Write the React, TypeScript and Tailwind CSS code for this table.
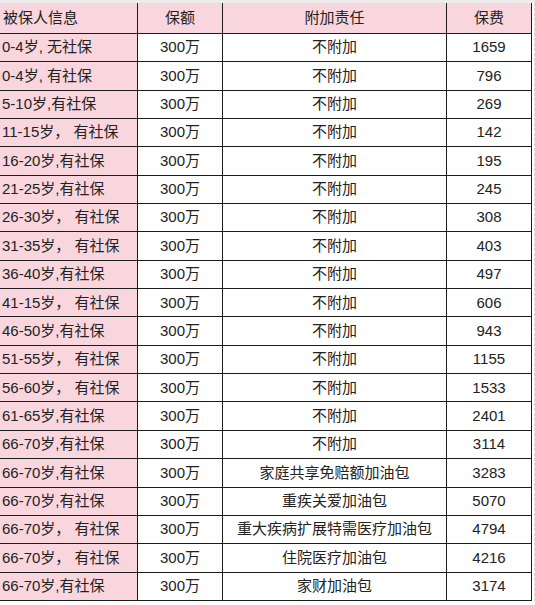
const rows: [string, string, string][] = [
  ["0-4岁, 无社保", "不附加", "1659"],
  ["0-4岁, 有社保", "不附加", "796"],
  ["5-10岁,有社保", "不附加", "269"],
  ["11-15岁， 有社保", "不附加", "142"],
  ["16-20岁,有社保", "不附加", "195"],
  ["21-25岁,有社保", "不附加", "245"],
  ["26-30岁， 有社保", "不附加", "308"],
  ["31-35岁， 有社保", "不附加", "403"],
  ["36-40岁,有社保", "不附加", "497"],
  ["41-15岁， 有社保", "不附加", "606"],
  ["46-50岁,有社保", "不附加", "943"],
  ["51-55岁， 有社保", "不附加", "1155"],
  ["56-60岁， 有社保", "不附加", "1533"],
  ["61-65岁,有社保", "不附加", "2401"],
  ["66-70岁,有社保", "不附加", "3114"],
  ["66-70岁,有社保", "家庭共享免赔额加油包", "3283"],
  ["66-70岁,有社保", "重疾关爱加油包", "5070"],
  ["66-70岁， 有社保", "重大疾病扩展特需医疗加油包", "4794"],
  ["66-70岁， 有社保", "住院医疗加油包", "4216"],
  ["66-70岁,有社保", "家财加油包", "3174"],
];

const cell = "flex items-center border-r border-b border-[#1c1c1c]";

export default function App() {
  return (
    <div
      className="w-[535px] h-[605px] bg-white text-[15px] text-[#222]"
      style={{ fontFamily: '"Liberation Sans", "Noto Sans CJK SC", sans-serif' }}
    >
      <div className="h-[3px] bg-[#ececec]" />
      <div className="flex">
        <div className="w-[532px]">
          <div className="grid grid-cols-[138px_85px_224px_85px] h-[31px] bg-[#f9d6de]">
            <div className={`${cell} pl-[3px]`}>被保人信息</div>
            <div className={`${cell} justify-center`}>保额</div>
            <div className={`${cell} justify-center`}>附加责任</div>
            <div className={`${cell} justify-center`}>保费</div>
          </div>
          {rows.map(([who, extra, fee], i) => (
            <div key={i} className="grid grid-cols-[138px_85px_224px_85px] h-[28.35px]">
              <div className={`${cell} pl-[2px] bg-[#f9d6de] whitespace-pre`}>{who}</div>
              <div className={`${cell} justify-center`}>300万</div>
              <div className={`${cell} justify-center`}>{extra}</div>
              <div className={`${cell} justify-center`}>{fee}</div>
            </div>
          ))}
        </div>
        <div className="w-[3px] border-r border-dashed border-[#d6d6d6]" />
      </div>
    </div>
  );
}
